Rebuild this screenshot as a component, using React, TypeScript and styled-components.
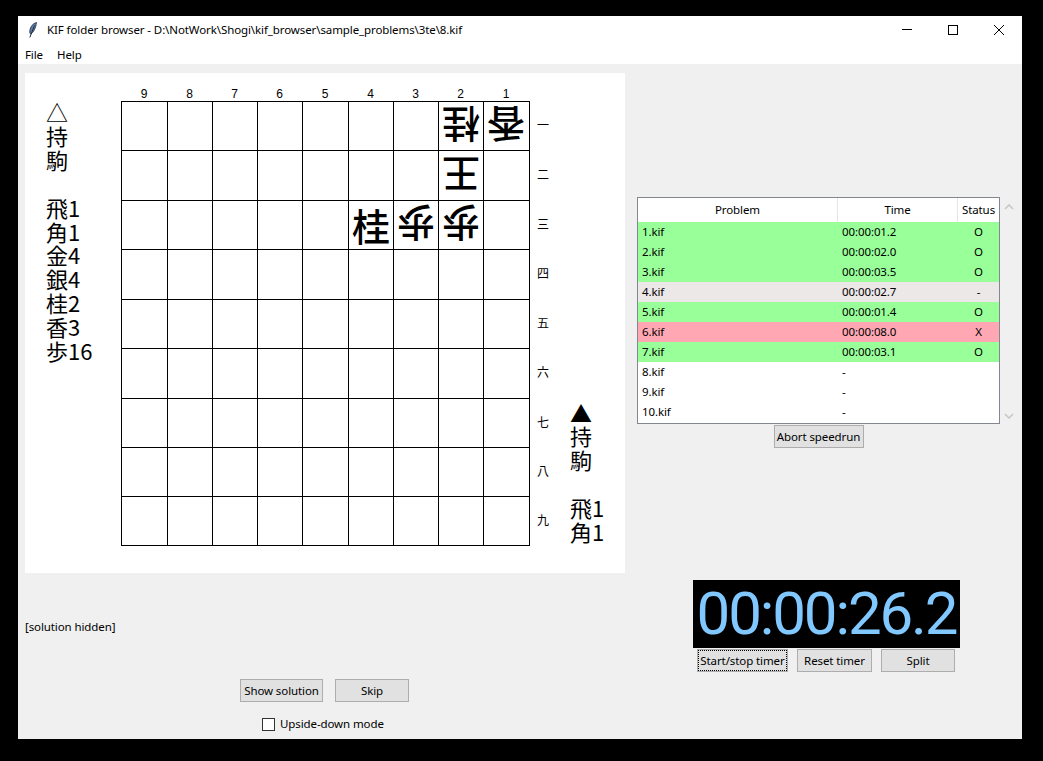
import styled, { createGlobalStyle } from "styled-components";

const GlobalStyle = createGlobalStyle`
  html, body {
    margin: 0;
    padding: 0;
    height: 100%;
    background: #000;
  }
  body {
    font-family: "Noto Sans", "Open Sans", sans-serif;
    font-size: 11.5px;
    letter-spacing: -0.1px;
    color: #000;
  }
`;

const Screen = styled.div`
  width: 1043px;
  height: 761px;
  padding: 16px 21px 22px 18px;
  box-sizing: border-box;
  overflow: hidden;
`;

const Window = styled.div`
  width: 1004px;
  height: 723px;
  display: flex;
  flex-direction: column;
  background: #f0f0f0;
`;

const TitleBar = styled.div`
  height: 28px;
  flex: none;
  display: flex;
  align-items: center;
  background: #fff;
  padding-left: 11px;
`;

const TitleText = styled.span`
  margin-left: 10px;
  flex: 1;
  line-height: 28px;
  white-space: nowrap;
`;

const WindowButton = styled.div`
  width: 46px;
  height: 28px;
  display: flex;
  align-items: center;
  justify-content: center;
`;

const MenuBar = styled.div`
  height: 20px;
  flex: none;
  display: flex;
  gap: 14px;
  padding-left: 7px;
  align-items: center;
  background: #fff;
`;

const Content = styled.div`
  flex: 1;
  display: flex;
  padding: 9px 0 0 7px;
`;

const LeftColumn = styled.div`
  width: 600px;
  flex: none;
  display: flex;
  flex-direction: column;
`;

const Canvas = styled.div`
  width: 600px;
  height: 500px;
  background: #fff;
  display: flex;
  letter-spacing: 0;
`;

const Hand = styled.div<{ $bottom?: boolean }>`
  font-family: "Noto Sans CJK JP", "Noto Sans", sans-serif;
  font-size: 22px;
  line-height: 23.9px;
  white-space: pre;
  align-self: ${({ $bottom }) => ($bottom ? "flex-end" : "flex-start")};
  padding: ${({ $bottom }) => ($bottom ? "0 0 29px 0" : "27px 0 0 21px")};
`;

const LeftHandSlot = styled.div`
  width: 96px;
  flex: none;
`;

const BoardBlock = styled.div`
  flex: none;
  align-self: flex-start;
  display: grid;
  grid-template-columns: 409px 40px;
  grid-template-rows: 28px auto;
`;

const FileLabels = styled.div`
  display: grid;
  grid-template-columns: 46px 45px 45px 45px 46px 45px 45px 45px 46px;
  align-items: end;
`;

const FileLabel = styled.span`
  text-align: center;
  font-family: "Liberation Sans", sans-serif;
  font-size: 12px;
  line-height: 13px;
`;

const Board = styled.div`
  grid-column: 1;
  grid-row: 2;
  display: grid;
  grid-template-columns: 46px 45px 45px 45px 46px 45px 45px 45px 46px;
  grid-template-rows: 49px 50px 49px 50px 49px 50px 49px 49px 49px;
  border-left: 1px solid #000;
  border-top: 1px solid #000;
`;

const Square = styled.div<{ $flip?: boolean }>`
  box-sizing: border-box;
  border-right: 1px solid #000;
  border-bottom: 1px solid #000;
  display: flex;
  align-items: center;
  justify-content: center;
  font-family: "Noto Sans CJK JP", sans-serif;
  font-size: 38px;
  font-weight: 500;
  & > span {
    display: block;
    height: 40px;
    line-height: 40px;
    transform: ${({ $flip }) => ($flip ? "rotate(180deg)" : "none")};
  }
`;

const RankLabels = styled.div`
  grid-column: 2;
  grid-row: 2;
  display: grid;
  grid-template-rows: 49px 50px 49px 50px 49px 50px 49px 49px 49px;
  margin-top: -1px;
`;

const RankLabel = styled.span`
  font-family: "Noto Sans CJK JP", sans-serif;
  font-size: 12px;
  line-height: 49px;
  padding-left: 7px;
`;

const SolutionLabel = styled.div`
  margin-top: 46px;
  line-height: 16px;
`;

const LeftButtons = styled.div`
  margin-top: 44px;
  padding-left: 215px;
  display: flex;
  gap: 12px;
`;

const Button = styled.button<{ $width: number; $focused?: boolean }>`
  width: ${({ $width }) => $width}px;
  height: 23px;
  padding: 0;
  box-sizing: border-box;
  background: #e1e1e1;
  border: 1px solid #adadad;
  font-family: inherit;
  font-size: 11.5px;
  letter-spacing: -0.1px;
  color: #000;
  white-space: nowrap;
  outline: ${({ $focused }) => ($focused ? "1px dotted #000" : "none")};
  outline-offset: -2px;
`;

const CheckRow = styled.label`
  margin-top: 15px;
  padding-left: 237px;
  display: flex;
  align-items: center;
  gap: 5px;
  line-height: 14px;
`;

const CheckBox = styled.span`
  width: 13px;
  height: 13px;
  box-sizing: border-box;
  background: #fff;
  border: 1px solid #333;
`;

const RightColumn = styled.div`
  margin-left: 12px;
  padding-top: 124px;
  display: flex;
  flex-direction: column;
`;

const ListRow = styled.div`
  display: flex;
`;

const ListBox = styled.div`
  width: 363px;
  height: 227px;
  box-sizing: border-box;
  border: 1px solid #828790;
  background: #fff;
`;

const HeaderRow = styled.div`
  display: grid;
  grid-template-columns: 200px 120px 41px;
  height: 24px;
`;

const HeaderCell = styled.div`
  text-align: center;
  line-height: 24px;
  border-right: 1px solid #e5e5e5;
  &:last-child {
    border-right: none;
  }
`;

const rowColours = {
  ok: "#99ff99",
  skip: "#ece8e8",
  bad: "#ffa8b4",
  none: "#fff",
};

const Row = styled.div<{ $state: keyof typeof rowColours }>`
  display: grid;
  grid-template-columns: 200px 120px 41px;
  height: 20px;
  line-height: 20px;
  background: ${({ $state }) => rowColours[$state]};
`;

const NameCell = styled.span`
  padding-left: 4px;
`;

const TimeCell = styled.span`
  padding-left: 4px;
`;

const StatusCell = styled.span`
  text-align: center;
`;

const ScrollBar = styled.div`
  width: 17px;
  height: 226px;
  display: flex;
  flex-direction: column;
  justify-content: space-between;
  align-items: center;
  padding: 7px 0 4px;
  box-sizing: border-box;
`;

const AbortRow = styled.div`
  width: 363px;
  margin-top: 1px;
  display: flex;
  justify-content: center;
`;

const TimerDisplay = styled.div`
  margin: 132px 0 0 56px;
  width: 267px;
  height: 68px;
  background: #000;
  color: #80c8ff;
  font-family: Roboto, sans-serif;
  font-size: 60px;
  letter-spacing: -2.1px;
  line-height: 68px;
  text-align: center;
  white-space: nowrap;
`;

const TimerButtons = styled.div`
  margin: 1px 0 0 60px;
  display: flex;
  gap: 9px;
`;

const Chevron = ({ up }: { up?: boolean }) => (
  <svg width="10" height="6" viewBox="0 0 10 6">
    <path
      d={up ? "M1 5 L5 1 L9 5" : "M1 1 L5 5 L9 1"}
      fill="none"
      stroke="#c8c8c8"
      strokeWidth="1.6"
    />
  </svg>
);

const Feather = () => (
  <svg width="8" height="16" viewBox="0 0 8 16">
    <path
      d="M7.5 0.5 C4 1.5 1.2 4.5 0.8 9 C0.7 10.5 1 11.5 1.6 12 C4.5 10.5 6.8 6 7.5 0.5 Z"
      fill="#5f7fa8"
      stroke="#1f2a3f"
      strokeWidth="0.8"
    />
    <path d="M5.5 3.5 L0.8 15.5" fill="none" stroke="#1f2a3f" strokeWidth="1" />
  </svg>
);

const files = ["9", "8", "7", "6", "5", "4", "3", "2", "1"];
const ranks = ["一", "二", "三", "四", "五", "六", "七", "八", "九"];

const pieces: Record<string, { glyph: string; flip: boolean }> = {
  "0-7": { glyph: "桂", flip: true },
  "0-8": { glyph: "香", flip: true },
  "1-7": { glyph: "王", flip: true },
  "2-5": { glyph: "桂", flip: false },
  "2-6": { glyph: "歩", flip: true },
  "2-7": { glyph: "歩", flip: true },
};

const problems: {
  name: string;
  time: string;
  status: string;
  state: keyof typeof rowColours;
}[] = [
  { name: "1.kif", time: "00:00:01.2", status: "O", state: "ok" },
  { name: "2.kif", time: "00:00:02.0", status: "O", state: "ok" },
  { name: "3.kif", time: "00:00:03.5", status: "O", state: "ok" },
  { name: "4.kif", time: "00:00:02.7", status: "-", state: "skip" },
  { name: "5.kif", time: "00:00:01.4", status: "O", state: "ok" },
  { name: "6.kif", time: "00:00:08.0", status: "X", state: "bad" },
  { name: "7.kif", time: "00:00:03.1", status: "O", state: "ok" },
  { name: "8.kif", time: "-", status: "", state: "none" },
  { name: "9.kif", time: "-", status: "", state: "none" },
  { name: "10.kif", time: "-", status: "", state: "none" },
];

export default function App() {
  return (
    <Screen>
      <GlobalStyle />
      <Window>
        <TitleBar>
          <Feather />
          <TitleText>
            KIF folder browser - D:\NotWork\Shogi\kif_browser\sample_problems\3te\8.kif
          </TitleText>
          <WindowButton>
            <svg width="10" height="10" viewBox="0 0 10 10">
              <path d="M0 4.5 H10" stroke="#000" />
            </svg>
          </WindowButton>
          <WindowButton>
            <svg width="10" height="10" viewBox="0 0 10 10">
              <rect x="0.5" y="0.5" width="9" height="9" fill="none" stroke="#000" />
            </svg>
          </WindowButton>
          <WindowButton>
            <svg width="10" height="10" viewBox="0 0 10 10">
              <path d="M0 0 L10 10 M10 0 L0 10" stroke="#000" />
            </svg>
          </WindowButton>
        </TitleBar>
        <MenuBar>
          <span>File</span>
          <span>Help</span>
        </MenuBar>
        <Content>
          <LeftColumn>
            <Canvas>
              <LeftHandSlot>
                <Hand>{"△\n持\n駒\n\n飛1\n角1\n金4\n銀4\n桂2\n香3\n歩16"}</Hand>
              </LeftHandSlot>
              <BoardBlock>
                <FileLabels>
                  {files.map((f) => (
                    <FileLabel key={f}>{f}</FileLabel>
                  ))}
                </FileLabels>
                <Board>
                  {ranks.map((_, r) =>
                    files.map((_, c) => {
                      const piece = pieces[`${r}-${c}`];
                      return (
                        <Square key={`${r}-${c}`} $flip={piece?.flip}>
                          {piece && <span>{piece.glyph}</span>}
                        </Square>
                      );
                    })
                  )}
                </Board>
                <RankLabels>
                  {ranks.map((r) => (
                    <RankLabel key={r}>{r}</RankLabel>
                  ))}
                </RankLabels>
              </BoardBlock>
              <Hand $bottom>{"▲\n持\n駒\n\n飛1\n角1"}</Hand>
            </Canvas>
            <SolutionLabel>[solution hidden]</SolutionLabel>
            <LeftButtons>
              <Button $width={83}>Show solution</Button>
              <Button $width={74}>Skip</Button>
            </LeftButtons>
            <CheckRow>
              <CheckBox />
              Upside-down mode
            </CheckRow>
          </LeftColumn>
          <RightColumn>
            <ListRow>
              <ListBox>
                <HeaderRow>
                  <HeaderCell>Problem</HeaderCell>
                  <HeaderCell>Time</HeaderCell>
                  <HeaderCell>Status</HeaderCell>
                </HeaderRow>
                {problems.map((p) => (
                  <Row key={p.name} $state={p.state}>
                    <NameCell>{p.name}</NameCell>
                    <TimeCell>{p.time}</TimeCell>
                    <StatusCell>{p.status}</StatusCell>
                  </Row>
                ))}
              </ListBox>
              <ScrollBar>
                <Chevron up />
                <Chevron />
              </ScrollBar>
            </ListRow>
            <AbortRow>
              <Button $width={90}>Abort speedrun</Button>
            </AbortRow>
            <TimerDisplay>00:00:26.2</TimerDisplay>
            <TimerButtons>
              <Button $width={91} $focused>
                Start/stop timer
              </Button>
              <Button $width={75}>Reset timer</Button>
              <Button $width={74}>Split</Button>
            </TimerButtons>
          </RightColumn>
        </Content>
      </Window>
    </Screen>
  );
}
